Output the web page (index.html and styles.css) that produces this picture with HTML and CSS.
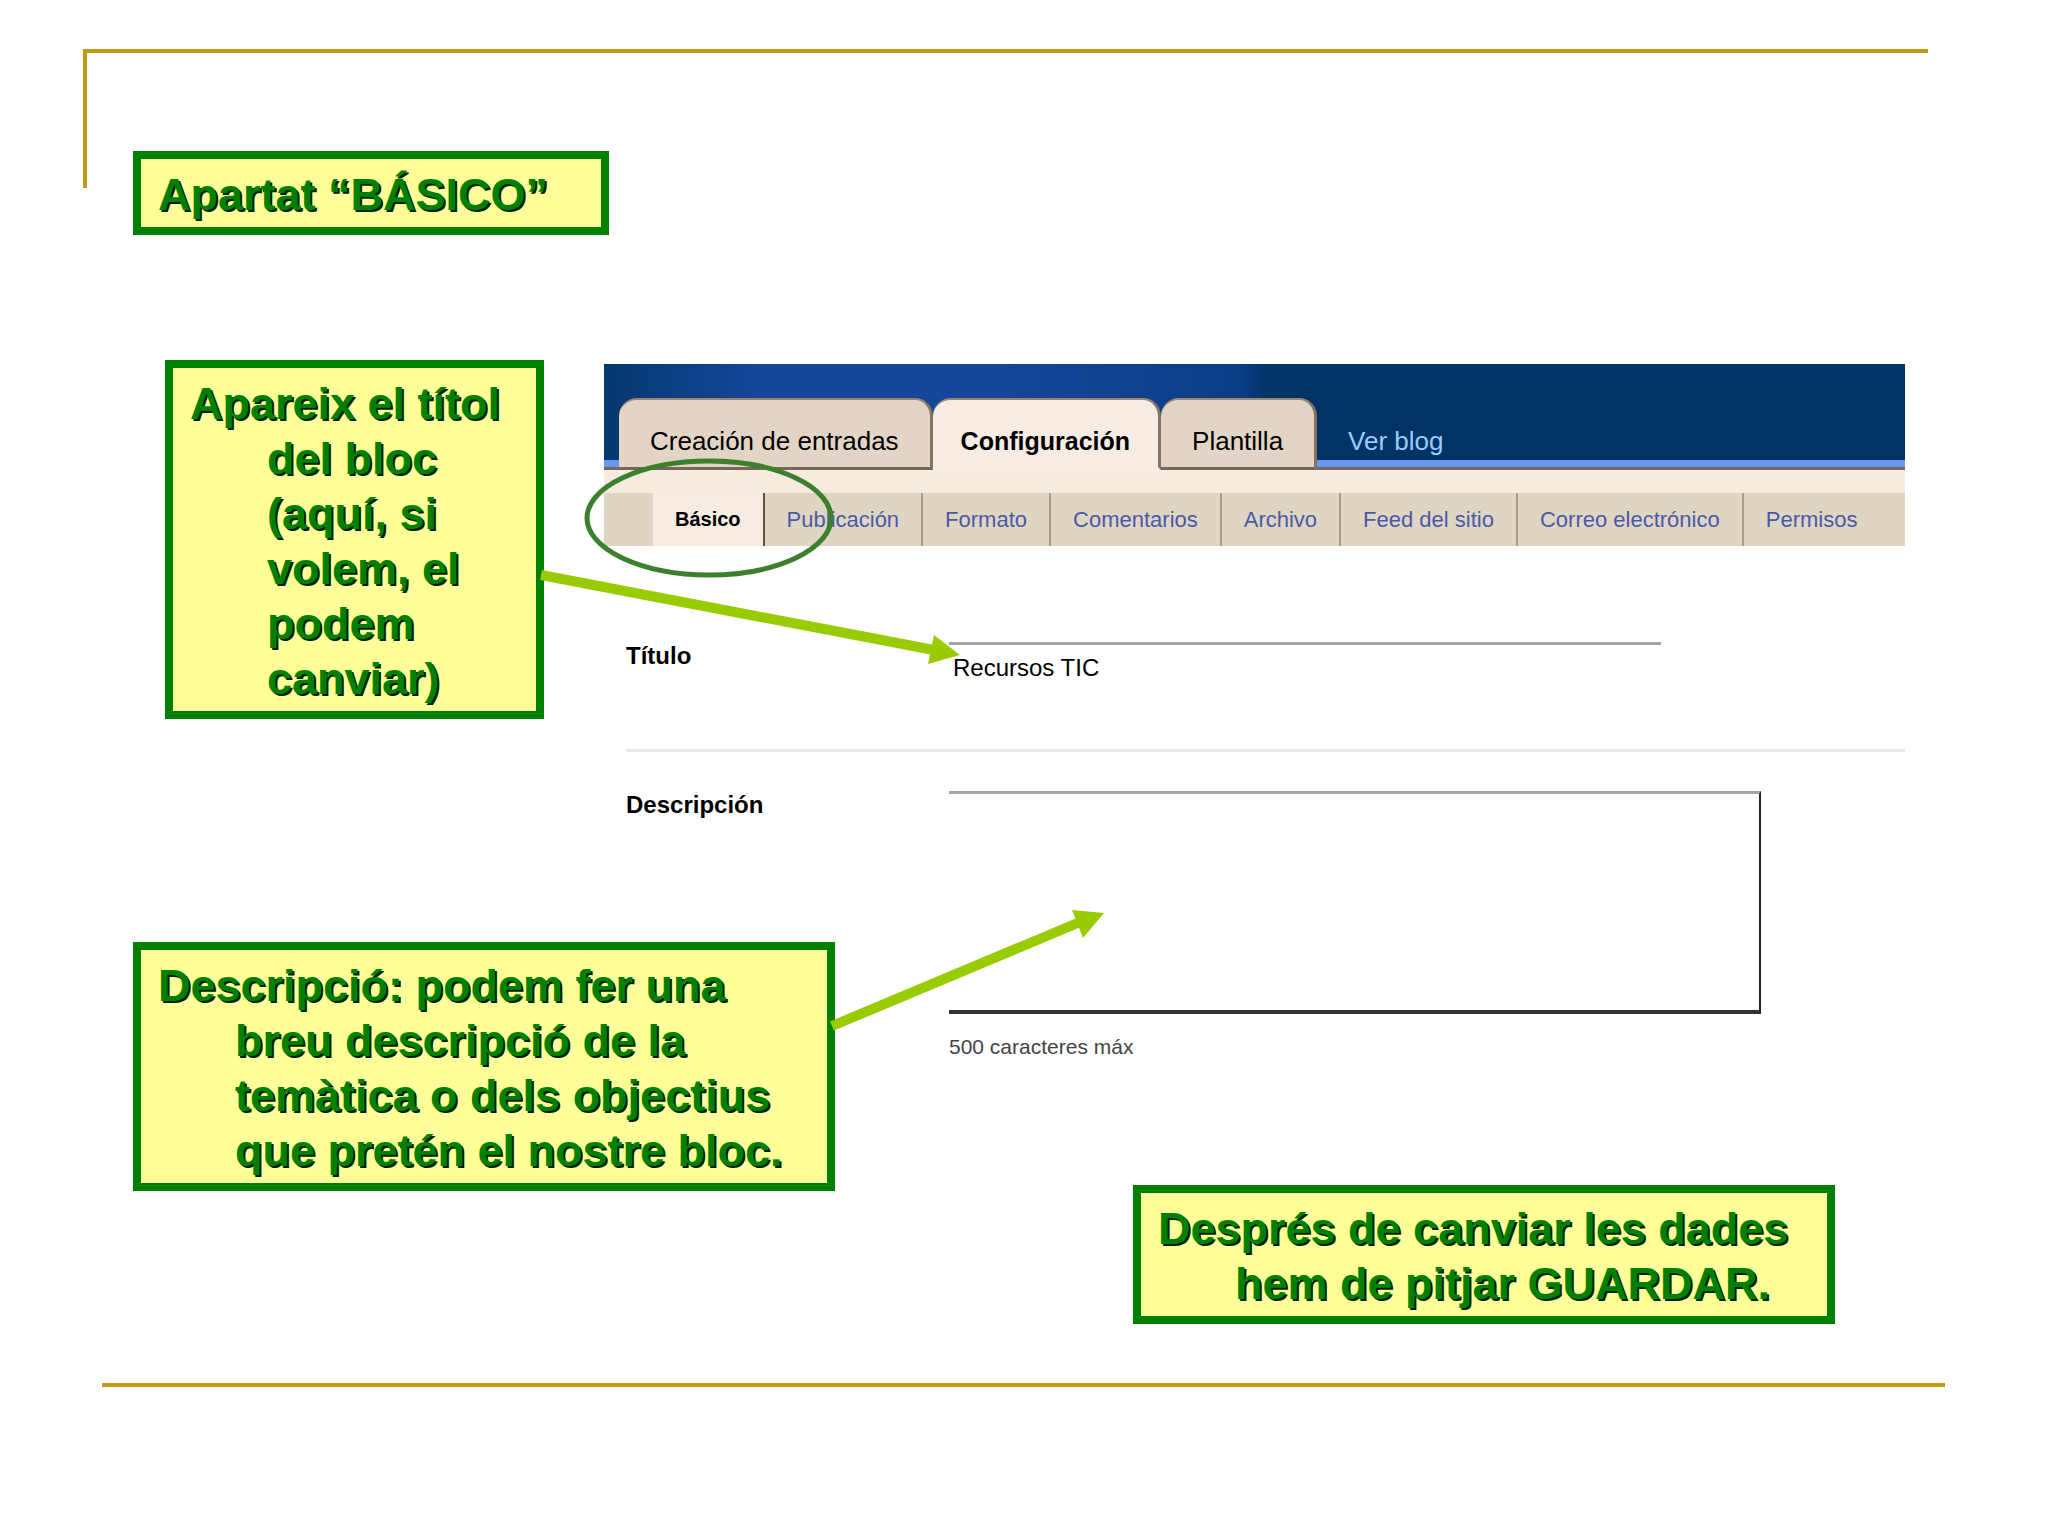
FILE: index.html
```
<!DOCTYPE html>
<html lang="ca">
<head>
  <meta charset="UTF-8">
  <meta name="viewport" content="width=device-width, initial-scale=1.0">
  <title>Apartat “BÁSICO”</title>
  <link rel="stylesheet" href="styles.css">
</head>
<body>

<div class="slide">
  <header class="slide-header">
    <h1 class="callout callout-heading">Apartat “BÁSICO”</h1>
  </header>

  <main class="content">
    <p class="callout callout-title">Apareix el títol del bloc (aquí, si volem, el podem canviar)</p>

    <section class="panel" lang="es">
      <nav class="tabs">
        <a class="tab" href="#">Creación de entradas</a>
        <a class="tab active" href="#">Configuración</a>
        <a class="tab" href="#">Plantilla</a>
        <a class="view-blog" href="#">Ver blog</a>
      </nav>
      <nav class="subnav">
        <a class="active" href="#">Básico</a>
        <a href="#">Publicación</a>
        <a href="#">Formato</a>
        <a href="#">Comentarios</a>
        <a href="#">Archivo</a>
        <a href="#">Feed del sitio</a>
        <a href="#">Correo electrónico</a>
        <a href="#">Permisos</a>
      </nav>
      <form class="settings">
        <div class="field field-title">
          <label for="title">Título</label>
          <input type="text" id="title" value="Recursos TIC">
        </div>
        <div class="field field-description">
          <label for="description">Descripción</label>
          <div class="field-body">
            <textarea id="description"></textarea>
            <small>500 caracteres máx</small>
          </div>
        </div>
      </form>
    </section>

    <p class="callout callout-description">Descripció: podem fer una breu descripció de la temàtica o dels objectius que pretén el nostre bloc.</p>
    <p class="callout callout-save">Després de canviar les dades hem de pitjar GUARDAR.</p>
  </main>

  <hr class="rule">

  <!-- arrows and circle over the panel -->
  <svg class="marks" viewBox="0 0 2048 1536" preserveAspectRatio="xMinYMin meet" aria-hidden="true">
    <ellipse cx="709" cy="518" rx="122" ry="57" fill="none" stroke="#3c802e" stroke-width="5"/>
    <g fill="#9c0" stroke="#9c0">
      <path d="M541 575L934 650" stroke-width="10"/>
      <path d="M934 635L960 655L928 664Z" stroke="none"/>
      <path d="M832 1026L1080 922" stroke-width="10"/>
      <path d="M1072 910L1104 913L1083 938Z" stroke="none"/>
    </g>
  </svg>
</div>

</body>
</html>
```
FILE: styles.css
```
* {
  box-sizing: border-box;
}
body {
  font-family: "Liberation Sans", Arial, sans-serif;
  margin: 0;
  background-color: #fff;
}
.slide {
  position: relative;
  display: flow-root;
  min-height: 100vh;
}
.slide-header {
  height: 139px;
  margin: 49px 120px 0 83px;
  padding: 98px 0 0 46px;
  border-top: 4px solid #c49a14;
  border-left: 4px solid #c49a14;
}
.callout {
  margin: 0;
  padding: 8px 17px 5px 94px;
  border: 8px solid #008000;
  background-color: #ff9;
  color: #008000;
  font-size: 45px;
  font-weight: bold;
  line-height: 55px;
  text-indent: -77px;
  text-shadow: 2px 2px 0 #002000;
}
.callout-heading {
  width: 476px;
}
.content {
  display: grid;
  grid-template-columns: 471px 1fr;
  align-items: start;
  margin: 172px 143px 0 133px;
}
.callout-title {
  grid-area: 1 / 1;
  width: 379px;
  margin-left: 32px;
}
.callout-description {
  grid-area: 2 / 1 / 3 / 3;
  width: 702px;
  margin-top: 223px;
}
.callout-save {
  grid-area: 3 / 2;
  justify-self: end;
  width: 702px;
  margin: -6px 70px 0 0;
}
.panel {
  grid-area: 1 / 2 / 3 / 3;
  margin-top: 4px;
}

/* blog settings panel */
.tabs {
  display: flex;
  align-items: flex-end;
  height: 106px;
  padding-left: 15px;
  background:
    linear-gradient(#75665e, #75665e) bottom / 100% 3px no-repeat,
    linear-gradient(#6896f0, #6896f0) bottom / 100% 10px no-repeat,
    linear-gradient(90deg, #05386f, #14479a 12%, #14479a 30%, #0b3d86 49%, #036 51%);
}
.tab,
.view-blog {
  height: 72px;
  padding: 28px 31px 0;
  font-size: 26px;
  line-height: 30px;
  text-decoration: none;
  white-space: nowrap;
}
.tab {
  padding-top: 26px;
  border-top: 2px solid #9c8472;
  border-right: 3px solid #85725f;
  border-bottom: 3px solid #75665e;
  border-radius: 18px 18px 0 0;
  background-color: #e3d5c5;
  color: #000;
}
.tab.active {
  padding: 26px 28px 0;
  border-bottom-color: #f6ece4;
  background-color: #f6ece4;
  font-size: 25px;
  font-weight: bold;
}
.view-blog {
  color: #9cf;
}
.subnav {
  display: flex;
  padding-left: 49px;
  border-top: 23px solid #f7ebe0;
  background-color: #dfd5c3;
}
.subnav a {
  padding: 14px 22px;
  border-right: 2px solid #a89c88;
  color: #4a5aa8;
  font-size: 22px;
  line-height: 25px;
  text-decoration: none;
  white-space: nowrap;
}
.subnav a.active {
  border-right-color: #5c5048;
  background-color: #f6ece4;
  color: #000;
  font-size: 20px;
  font-weight: bold;
}
.subnav a:last-child {
  border-right: none;
}
.settings {
  padding-left: 22px;
  font-size: 24px;
}
.field {
  display: grid;
  grid-template-columns: 323px 1fr;
  align-items: start;
}
.field label {
  font-weight: bold;
  line-height: 28px;
}
.field-title {
  padding: 96px 0 61px;
  border-bottom: 3px solid #e9e9ea;
}
.field-description {
  padding-top: 39px;
}
.field input,
.field textarea {
  border: none;
  border-top: 3px solid #a5a3a6;
  background: none;
  font: inherit;
}
.field input {
  width: 712px;
  height: 46px;
  padding: 2px 4px 0;
}
.field textarea {
  display: block;
  width: 812px;
  height: 223px;
  border-right: 2px solid #222;
  border-bottom: 4px solid #333;
  resize: none;
}
.field small {
  display: block;
  margin-top: 20px;
  color: #444;
  font-size: 21px;
  line-height: 26px;
}

.rule {
  height: 4px;
  margin: 59px 103px 0 102px;
  border: none;
  background-color: #c49a14;
}
.marks {
  position: absolute;
  top: 0;
  left: 0;
  width: 100%;
  pointer-events: none;
}
```
